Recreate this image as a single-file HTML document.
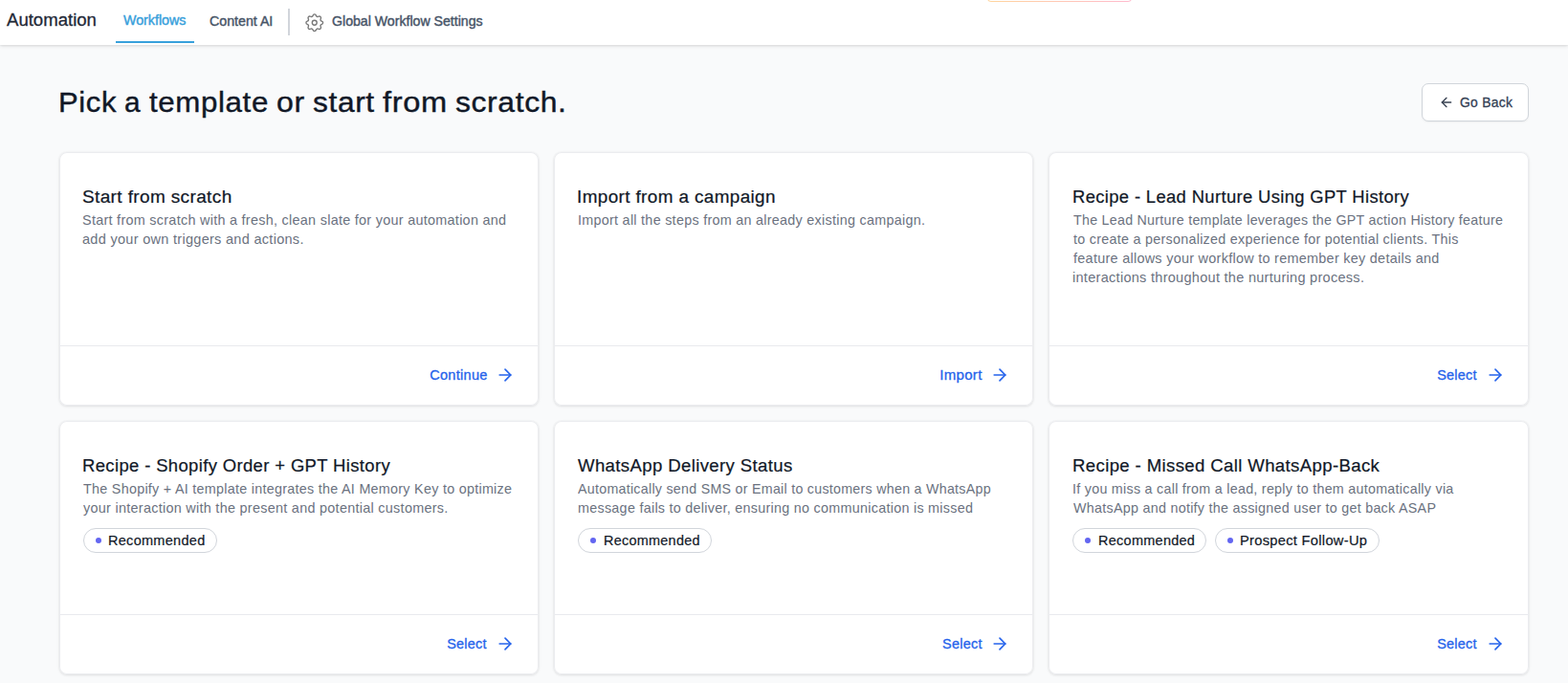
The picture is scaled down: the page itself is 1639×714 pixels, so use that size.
<!DOCTYPE html>
<html lang="en">
<head>
<meta charset="utf-8">
<title>Automation - Workflows</title>
<style>
*{box-sizing:border-box;margin:0;padding:0}
html,body{width:1639px;height:714px;overflow:hidden}
body{background:#f9fafb;font-family:"Liberation Sans",sans-serif;color:#111827;position:relative}
span{display:inline-block;white-space:nowrap;transform-origin:0 50%}
.topbar{position:absolute;left:0;top:0;width:1639px;height:47px;background:#fff;box-shadow:0 1px 4px rgba(0,0,0,.12),0 1px 2px rgba(0,0,0,.05)}
.brand{position:absolute;left:6px;top:8.76px;font-size:18px;line-height:24px;color:#1f2937;white-space:nowrap;-webkit-text-stroke:.3px #1f2937}
.tab{position:absolute;top:12.18px;font-size:13.9px;line-height:20px;color:#475467;white-space:nowrap;-webkit-text-stroke:.4px currentColor}
.tab.active{color:#38a0db;top:11.18px}
.t1{left:128px}.t2{left:219px}.t3{left:347px}
.tab-underline{position:absolute;left:121px;top:43px;width:82px;height:2px;background:#38a0db}
.vsep{position:absolute;left:301px;top:9px;width:2px;height:28px;background:#d1d5db}
.gear{position:absolute;left:316.95px;top:11.75px;width:23.5px;height:23.5px}
.promo{position:absolute;left:1032px;top:-30px;width:150.5px;height:32px;border-radius:4px;background:linear-gradient(90deg,#ffd59c,#ffbacd)}
.promo b{position:absolute;left:1px;right:1px;top:1px;bottom:1px;border-radius:3px;background:#fff}
h1{letter-spacing:.02em;position:absolute;left:62px;width:600px;height:36px;top:88.67px;font-size:29.8px;line-height:36px;font-weight:400;color:#111827;white-space:nowrap;-webkit-text-stroke:.4px #111827}
.back{letter-spacing:.02em;position:absolute;left:1486px;top:87px;width:112px;height:40px;border:1px solid #d1d5db;border-radius:7px;background:#fff;box-shadow:0 1px 2px rgba(0,0,0,.05);font-size:14.1px;color:#344054}
.back svg{position:absolute;left:17px;top:11px}
.back span{position:absolute;left:39px;top:9.11px;line-height:20px;-webkit-text-stroke:.3px #344054}
.grid{position:absolute;left:62px;top:159px;width:1536px;display:grid;grid-template-columns:501px 501px 502px;gap:16px 16px}
.card{position:relative;height:265px;background:#fff;border-radius:8px;box-shadow:0 0 0 1px #ebecef inset,0 1px 3px rgba(0,0,0,.1),0 0 2px rgba(0,0,0,.05)}
.card h3{letter-spacing:.02em;position:absolute;left:24px;top:32.76px;font-size:18px;line-height:28px;font-weight:400;color:#111827;white-space:nowrap;-webkit-text-stroke:.22px #111827}
.card p{letter-spacing:.02em;position:absolute;left:24px;top:61.11px;width:470px;font-size:14.1px;line-height:20px;color:#6b7280}
.card p .ln{display:block;height:20px}
.tags{position:absolute;left:25px;top:112px;display:flex;gap:9px}
.tag{letter-spacing:.02em;position:relative;height:26px;border:1px solid #d1d5db;border-radius:13px;font-size:14.1px;line-height:20px;color:#111827;white-space:nowrap;background:#fff;-webkit-text-stroke:.2px #111827}
.tag i{position:absolute;left:12.2px;top:9.1px;display:block;width:6.2px;height:6.2px;border-radius:50%;background:#6366f1}
.tag span{position:absolute;top:2.11px}
.foot{position:absolute;left:1px;right:1px;top:202px;height:62px;border-top:1px solid #e9eaee}
.foot a{letter-spacing:.02em;position:absolute;right:23px;top:0;height:61px;font-size:14.1px;line-height:20px;color:#2563eb;text-decoration:none;white-space:nowrap;-webkit-text-stroke:.3px #2563eb}
.foot a span{position:absolute;top:20.31px}
.foot a .ar{position:absolute;right:0;top:20px;display:block}
.w{position:relative}
</style>
</head>
<body>
<header class="topbar">
  <div class="promo"><b></b></div>
  <div class="brand"><span id="brand" style="transform:scaleX(1.0316);margin-left:0.53px">Automation</span></div>
  <div class="tab active t1"><span id="t1" style="transform:scaleX(1.0260);margin-left:1.17px">Workflows</span></div>
  <div class="tab-underline"></div>
  <div class="tab t2"><span id="t2" style="transform:scaleX(1.0222);margin-left:-0.28px">Content AI</span></div>
  <div class="vsep"></div>
  <svg class="gear" viewBox="0 0 24 24" fill="none" stroke="#787878" stroke-width="1.4" stroke-linecap="round" stroke-linejoin="round"><path d="M10.325 4.317c.426-1.756 2.924-1.756 3.35 0a1.724 1.724 0 002.573 1.066c1.543-.94 3.31.826 2.37 2.37a1.724 1.724 0 001.065 2.572c1.756.426 1.756 2.924 0 3.35a1.724 1.724 0 00-1.066 2.573c.94 1.543-.826 3.31-2.37 2.37a1.724 1.724 0 00-2.572 1.065c-.426 1.756-2.924 1.756-3.35 0a1.724 1.724 0 00-2.573-1.066c-1.543.94-3.31-.826-2.37-2.37a1.724 1.724 0 00-1.065-2.572c-1.756-.426-1.756-2.924 0-3.35a1.724 1.724 0 001.066-2.573c-.94-1.543.826-3.31 2.37-2.37.996.608 2.296.07 2.572-1.065z"/><circle cx="12" cy="12" r="2.5"/></svg>
  <div class="tab t3"><span id="t3" style="transform:scaleX(1.0173);margin-left:0.15px">Global Workflow Settings</span></div>
</header>
<h1><span class="w" id="h1_w1" style="left:-0.76px;transform:scaleX(1.0400)">Pick</span> <span class="w" id="h1_w2" style="left:0.49px">a</span> <span class="w" id="h1_w3" style="left:0.00px;transform:scaleX(1.0490)">template</span> <span class="w" id="h1_w4" style="left:5.14px;transform:scaleX(1.0747)">or</span> <span class="w" id="h1_w5" style="left:7.02px;transform:scaleX(1.0629)">start</span> <span class="w" id="h1_w6" style="left:10.02px;transform:scaleX(1.0945)">from</span> <span class="w" id="h1_w7" style="left:15.56px;transform:scaleX(1.0682)">scratch.</span></h1>
<div class="back"><svg width="16" height="16" viewBox="0 0 24 24" fill="none" stroke="#374151" stroke-width="2" stroke-linecap="round" stroke-linejoin="round"><path d="M19 12H5"/><path d="M12 19l-7-7 7-7"/></svg><span id="back" style="transform:scaleX(0.9836);margin-left:0.45px">Go Back</span></div>
<main class="grid">
  <article class="card" id="c1">
    <h3><span id="c1_t" style="transform:scaleX(1.0543);margin-left:0.15px">Start from scratch</span></h3>
    <p><span class="ln"><span id="c1_l1" style="transform:scaleX(1.0207);margin-left:0.01px">Start from scratch with a fresh, clean slate for your automation and</span></span> <span class="ln"><span id="c1_l2" style="transform:scaleX(1.0298);margin-left:0.36px">add your own triggers and actions.</span></span></p>
    <div class="foot"><a><span id="c1_a" style="transform:scaleX(1.0311);transform-origin:100% 50%;right:29.53px">Continue</span><svg class="ar" style="right:1.00px" width="20" height="20" viewBox="0 0 24 24" fill="none" stroke="#2563eb" stroke-width="2" stroke-linecap="round" stroke-linejoin="round"><path d="M5 12h14"/><path d="M12 5l7 7-7 7"/></svg></a></div>
  </article>
  <article class="card" id="c2">
    <h3><span id="c2_t" style="transform:scaleX(1.0500);margin-left:-0.29px">Import from a campaign</span></h3>
    <p><span class="ln"><span id="c2_l1" style="transform:scaleX(1.0173);margin-left:0.90px">Import all the steps from an already existing campaign.</span></span></p>
    <div class="foot"><a><span id="c2_a" style="transform:scaleX(1.0664);transform-origin:100% 50%;right:29.21px">Import</span><svg class="ar" style="right:1.00px" width="20" height="20" viewBox="0 0 24 24" fill="none" stroke="#2563eb" stroke-width="2" stroke-linecap="round" stroke-linejoin="round"><path d="M5 12h14"/><path d="M12 5l7 7-7 7"/></svg></a></div>
  </article>
  <article class="card" id="c3">
    <h3><span id="c3_t" style="transform:scaleX(1.0211);margin-left:0.69px">Recipe - Lead Nurture Using GPT History</span></h3>
    <p><span class="ln"><span id="c3_l1" style="transform:scaleX(1.0085);margin-left:2.44px">The Lead Nurture template leverages the GPT action History feature</span></span> <span class="ln"><span id="c3_l2" style="transform:scaleX(1.0149);margin-left:1.97px">to create a personalized experience for potential clients. This</span></span> <span class="ln"><span id="c3_l3" style="transform:scaleX(1.0215);margin-left:1.53px">feature allows your workflow to remember key details and</span></span> <span class="ln"><span id="c3_l4" style="transform:scaleX(1.0291);margin-left:0.85px">interactions throughout the nurturing process.</span></span></p>
    <div class="foot"><a><span id="c3_a" style="transform:scaleX(1.0210);transform-origin:100% 50%;right:30.09px">Select</span><svg class="ar" style="right:1.00px" width="20" height="20" viewBox="0 0 24 24" fill="none" stroke="#2563eb" stroke-width="2" stroke-linecap="round" stroke-linejoin="round"><path d="M5 12h14"/><path d="M12 5l7 7-7 7"/></svg></a></div>
  </article>
  <article class="card" id="c4">
    <h3><span id="c4_t" style="transform:scaleX(1.0249);margin-left:0.05px">Recipe - Shopify Order + GPT History</span></h3>
    <p><span class="ln"><span id="c4_l1" style="transform:scaleX(1.0159);margin-left:0.95px">The Shopify + AI template integrates the AI Memory Key to optimize</span></span> <span class="ln"><span id="c4_l2" style="transform:scaleX(1.0215);margin-left:1.30px">your interaction with the present and potential customers.</span></span></p>
    <div class="tags"><div class="tag" id="c4_g1" style="width:140px"><i></i><span id="c4_g1t" style="transform:scaleX(1.0285);left:24.96px">Recommended</span></div></div>
    <div class="foot"><a><span id="c4_a" style="transform:scaleX(1.0210);transform-origin:100% 50%;right:30.37px">Select</span><svg class="ar" style="right:1.00px" width="20" height="20" viewBox="0 0 24 24" fill="none" stroke="#2563eb" stroke-width="2" stroke-linecap="round" stroke-linejoin="round"><path d="M5 12h14"/><path d="M12 5l7 7-7 7"/></svg></a></div>
  </article>
  <article class="card" id="c5">
    <h3><span id="c5_t" style="transform:scaleX(1.0316);margin-left:1.11px">WhatsApp Delivery Status</span></h3>
    <p><span class="ln"><span id="c5_l1" style="transform:scaleX(1.0086);margin-left:1.03px">Automatically send SMS or Email to customers when a WhatsApp</span></span> <span class="ln"><span id="c5_l2" style="transform:scaleX(1.0164);margin-left:0.71px">message fails to deliver, ensuring no communication is missed</span></span></p>
    <div class="tags"><div class="tag" id="c5_g1" style="width:140px"><i></i><span id="c5_g1t" style="transform:scaleX(1.0215);left:25.94px">Recommended</span></div></div>
    <div class="foot"><a><span id="c5_a" style="transform:scaleX(1.0215);transform-origin:100% 50%;right:29.54px">Select</span><svg class="ar" style="right:1.00px" width="20" height="20" viewBox="0 0 24 24" fill="none" stroke="#2563eb" stroke-width="2" stroke-linecap="round" stroke-linejoin="round"><path d="M5 12h14"/><path d="M12 5l7 7-7 7"/></svg></a></div>
  </article>
  <article class="card" id="c6">
    <h3><span id="c6_t" style="transform:scaleX(1.0318);margin-left:0.60px">Recipe - Missed Call WhatsApp-Back</span></h3>
    <p><span class="ln"><span id="c6_l1" style="transform:scaleX(1.0123);margin-left:0.66px">If you miss a call from a lead, reply to them automatically via</span></span> <span class="ln"><span id="c6_l2" style="transform:scaleX(1.0138);margin-left:1.51px">WhatsApp and notify the assigned user to get back ASAP</span></span></p>
    <div class="tags"><div class="tag" id="c6_g1" style="width:140px"><i></i><span id="c6_g1t" style="transform:scaleX(1.0256);left:26.33px">Recommended</span></div><div class="tag" id="c6_g2" style="width:172px"><i></i><span id="c6_g2t" style="transform:scaleX(1.0404);left:25.00px">Prospect Follow-Up</span></div></div>
    <div class="foot"><a><span id="c6_a" style="transform:scaleX(1.0212);transform-origin:100% 50%;right:30.09px">Select</span><svg class="ar" style="right:1.00px" width="20" height="20" viewBox="0 0 24 24" fill="none" stroke="#2563eb" stroke-width="2" stroke-linecap="round" stroke-linejoin="round"><path d="M5 12h14"/><path d="M12 5l7 7-7 7"/></svg></a></div>
  </article>
</main>
</body>
</html>
